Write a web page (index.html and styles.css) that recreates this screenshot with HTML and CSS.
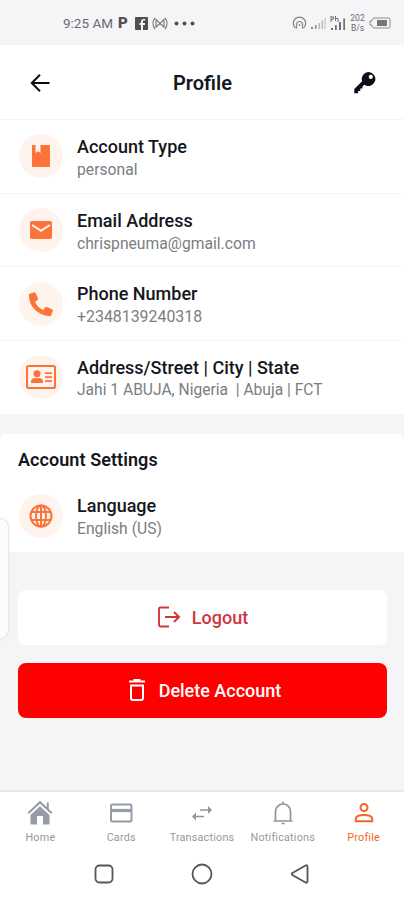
FILE: index.html
```html
<!DOCTYPE html>
<html lang="en">
<head>
    <meta charset="UTF-8">
    <meta name="viewport" content="width=device-width, initial-scale=1.0">
    <title>Profile</title>
    <link rel="stylesheet" href="styles.css">
</head>
<body>
    <div class="status-bar">
        <div class="status-left">
            <span class="time">9:25 AM</span>
            <span class="p-icon">P</span>
            <svg class="fb" width="13" height="13" viewBox="0 0 13 13"><rect width="13" height="13" rx="1" fill="#505053"/><path d="M8 13V8h2V6H8V4.600c0-.7.3-1 1-1h1.200V2H8.500C6.700 2 6 3 6 4.400V6H4.500v2H6v5z" fill="#f5f5f7"/></svg>
            <svg width="16" height="13" viewBox="0 0 16 13" fill="none" stroke="#77777a" stroke-width="1.100"><path d="M3 1C.3 3.500.3 9.500 3 12M13 1c2.700 2.500 2.700 8.500 0 11M4 11V2.500l4 4 4-4V11M4 10l4-3.500 4 3.500"/></svg>
            <svg class="dots" width="21" height="5" viewBox="0 0 21 5" fill="#505053"><circle cx="2.500" cy="2.500" r="2"/><circle cx="10.500" cy="2.500" r="2"/><circle cx="18.500" cy="2.500" r="2"/></svg>
        </div>
        <div class="status-right">
            <svg width="15" height="14" viewBox="0 0 15 14" fill="none" stroke="#858588" stroke-width="1.200"><path d="M3.500 12a6.200 6.200 0 1 1 8 0M4.500 12.500V8.500a3 3 0 0 1 6 0v4M7.500 8v2"/></svg>
            <svg width="15" height="12" viewBox="0 0 15 12" fill="#8b8b8e"><path d="M0 10h2v2H0zM4 8h1.500v4H4z"/><path d="M7.500 6H9v6H7.500zM10.500 3.500H12V12h-1.500zM13.500 1h1v11h-1z" opacity=".55"/></svg>
            <svg width="16" height="14" viewBox="0 0 16 14" fill="#707073"><path d="M1 12h2v2H1zM5 9h1.700v5H5zM9 6h2v8H9zM13.300 2.500h1.700V14h-1.700z"/><path d="M1 0v6M1 1h2.500v2L1 4M5.500 0v5M5.500 2.500H8V6" fill="none" stroke="#707073"/></svg>
            <div class="speed"><span>202</span><span>B/s</span></div>
            <svg width="22" height="12" viewBox="0 0 22 12"><path d="M3 2.500 5 1h14.500Q21 1 21 2.500v7Q21 11 19.500 11H5L3 9.500V8H1V4h2z" fill="none" stroke="#8b8b8e"/><path d="M8 3h10v6H8z" fill="#77777a"/></svg>
        </div>
    </div>

    <header class="header">
        <svg width="24" height="24" viewBox="0 0 24 24" fill="none" stroke="#0b0d12" stroke-width="2"><path d="M21.500 12H4M12 3.700 3.800 12l8.200 8.300"/></svg>
        <h1>Profile</h1>
        <svg width="24" height="24" viewBox="0 0 24 24"><path fill="#0b0f1c" fill-rule="evenodd" d="M15.800 1a7 7 0 0 0-6.700 9.200L1.300 18v4.300h3.800v-2.400h2.200v-2.300h2.200v-2.200l1.800-1.700A7 7 0 1 0 15.800 1zm2 2.800a2 2 0 1 1 0 4.200 2 2 0 0 1 0-4.200z"/></svg>
    </header>

    <section class="list">
        <div class="row">
            <div class="icon"><svg width="18" height="22" viewBox="0 0 18 22"><path fill="#fb7338" d="M1 0h2.500v8L6 6.200 8.500 8V0H17a1 1 0 0 1 1 1v20a1 1 0 0 1-1 1H1a1 1 0 0 1-1-1V1a1 1 0 0 1 1-1z"/></svg></div>
            <div class="text"><h2>Account Type</h2><p>personal</p></div>
        </div>
        <div class="row">
            <div class="icon"><svg width="22" height="18" viewBox="0 0 22 18"><rect width="22" height="18" rx="2" fill="#fb7338"/><path d="m2 4 9 5.700L20 4" fill="none" stroke="#fff3ee" stroke-width="2"/></svg></div>
            <div class="text"><h2>Email Address</h2><p>chrispneuma@gmail.com</p></div>
        </div>
        <div class="row">
            <div class="icon"><svg width="24" height="24" viewBox="0 0 24 24"><path fill="#fb7338" d="M.6 1.800 5 .4c.8-.2 1.400.1 1.700.8l2.200 5c.3.700.1 1.300-.4 1.700L6 10c1.700 3.500 4.400 6.200 8 8l2.200-2.600c.4-.5 1-.7 1.700-.4l5 2.200c.7.3 1 .9.800 1.700l-1.400 4.400c-.2.600-.7.900-1.300.9C9 23.500-.5 14 0 3c0-.6.1-1 .6-1.200z"/></svg></div>
            <div class="text"><h2>Phone Number</h2><p class="number">+2348139240318</p></div>
        </div>
        <div class="row">
            <div class="icon"><svg width="30" height="24" viewBox="0 0 30 24" fill="#fb7338"><rect x="1" y="1" width="28" height="22" rx="1.800" fill="none" stroke="#fb7338" stroke-width="2"/><circle cx="11" cy="8.700" r="3.500"/><path d="M5 18v-1.600c0-2.400 2-3.500 4-3.500.8.500 3.200.5 4 0 2 0 4 1.100 4 3.500V18zM19 7.200h7v1.700h-7zM19 11.200h7v1.700h-7zM19 15.200h7v1.700h-7z"/></svg></div>
            <div class="text"><h2>Address/Street | City | State</h2><p class="address">Jahi 1 ABUJA, Nigeria&nbsp; | Abuja | FCT</p></div>
        </div>
    </section>

    <section class="settings">
        <h3>Account Settings</h3>
        <div class="row">
            <div class="icon"><svg width="24" height="24" viewBox="0 0 24 24" fill="none" stroke="#fb7338" stroke-width="2"><circle cx="12" cy="12" r="10.500"/><ellipse cx="12" cy="12" rx="5" ry="10.500"/><path d="M12 1.500v21M2.500 8h19M2.500 16h19"/></svg></div>
            <div class="text"><h2>Language</h2><p>English (US)</p></div>
        </div>
    </section>
    <div class="edge-panel"></div>

    <div class="actions">
        <button class="btn logout">
            <svg width="24" height="22" viewBox="0 0 24 22" fill="none" stroke="#d0353d" stroke-width="1.900"><path d="M12 1.500H3.500Q2 1.500 2 3v16q0 1.500 1.500 1.500H12M8 11h14M17 6l5 5-5 5"/></svg>
            Logout
        </button>
        <button class="btn delete">
            <svg width="18" height="22" viewBox="0 0 18 22" fill="none" stroke="#fff" stroke-width="2"><path d="M1 2.500h16M5.500 1h7M3 6.500h12V19q0 2-2 2H5q-2 0-2-2z"/></svg>
            Delete Account
        </button>
    </div>

    <nav class="tabs">
        <a class="tab">
            <svg width="26" height="26" viewBox="0 0 26 26"><path fill="#969ba8" d="M13 6.200 22.500 15v8.500q0 1-1 1H16V16h-6v8.500H4.500q-1 0-1-1V15z"/><path d="m1.200 13.200 11.800-11 11.800 11M20.800 9V2.500" fill="none" stroke="#969ba8" stroke-width="2"/></svg>
            Home
        </a>
        <a class="tab">
            <svg width="26" height="26" viewBox="0 0 26 26" fill="none" stroke="#969ba8" stroke-width="2"><rect x="3" y="4.500" width="20.500" height="17" rx="1.500"/><path d="M3 10.500h20.500" stroke-width="3.200"/></svg>
            Cards
        </a>
        <a class="tab">
            <svg width="26" height="26" viewBox="0 0 26 26" fill="#929499"><path d="M11 9.200h8V6l4 4-4 4v-3.200h-8zM15 15.700H7v-3.200l-4 4 4 4v-3.200h8z"/></svg>
            Transactions
        </a>
        <a class="tab">
            <svg width="26" height="26" viewBox="0 0 26 26" fill="none" stroke="#929499" stroke-width="1.700"><path d="M3.500 21h19M5.500 21v-9.500a7.500 7.500 0 0 1 15 0V21M13 4V1.500M11.500 23.500h3"/></svg>
            Notifications
        </a>
        <a class="tab active">
            <svg width="26" height="26" viewBox="0 0 26 26" fill="none" stroke="#f4652a" stroke-width="2"><circle cx="13" cy="7.500" r="3.500"/><path d="M4.800 21.200v-2.500c0-5 16.400-5 16.400 0v2.500z"/></svg>
            Profile
        </a>
    </nav>

    <div class="system-nav">
        <svg width="20" height="20" viewBox="0 0 20 20"><rect x="1.500" y="1.500" width="17" height="17" rx="4"/></svg>
        <svg width="22" height="22" viewBox="0 0 22 22"><circle cx="11" cy="11" r="9.500"/></svg>
        <svg width="20" height="20" viewBox="0 0 20 20"><path d="M2.400 9 15.500 1.500q2-.8 2 1.200v14.600q0 2-2 1.200L2.400 11q-1.400-1 0-2z"/></svg>
    </div>
</body>
</html>
```
FILE: styles.css
```css
* { box-sizing: border-box; }
body {
    margin: 0;
    width: 404px;
    height: 900px;
    overflow: hidden;
    display: flex;
    flex-direction: column;
    position: relative;
    background-color: #f5f5f8;
    color: #14171c;
    font-family: Roboto, sans-serif;
}
h1, h2, h3, p { margin: 0; }
svg { display: block; flex-shrink: 0; }
.status-bar {
    height: 45px;
    flex-shrink: 0;
    display: flex;
    justify-content: space-between;
    align-items: center;
    padding: 1px 13px 0 63px;
    color: #6a6a6d;
}
.status-left, .status-right {
    display: flex;
    align-items: center;
}
.status-left { gap: 4px; }
.status-right { gap: 4px; }
.time { font-size: 13.5px; width: 51px; white-space: nowrap; }
.p-icon { font-size: 15px; font-weight: 900; color: #505053; width: 10px; }
.fb { margin-left: 3px; }
.dots { margin-left: 2px; }
.speed {
    display: flex;
    flex-direction: column;
    gap: 1px;
    width: 15px;
    font-size: 8.5px;
    line-height: 9px;
    text-align: center;
}
.header {
    height: 74px;
    flex-shrink: 0;
    display: flex;
    align-items: center;
    justify-content: space-between;
    padding: 2px 27px 0 28px;
    background-color: white;
}
.header h1 { font-size: 20px; font-weight: 600; line-height: 24px; }
.list { flex-shrink: 0; background-color: white; }
.row {
    display: flex;
    align-items: center;
    height: 73.7px;
    padding: 0 18px 0 19px;
    gap: 14px;
}
.list .row { border-top: 1px solid #f5f5f7; }
.icon {
    width: 44px;
    height: 44px;
    border-radius: 50%;
    background-color: #fff3ee;
    display: flex;
    align-items: center;
    justify-content: center;
    flex-shrink: 0;
}
.text { padding-top: 4px; white-space: nowrap; }
h2 { font-size: 18px; font-weight: 500; line-height: 22px; }
.text p { font-size: 15.7px; line-height: 23px; color: #7b7d81; }
.text .number { font-size: 15.9px; }
.text .address { font-size: 15.6px; }
.settings {
    flex-shrink: 0;
    height: 118.2px;
    margin-top: 20px;
    padding-top: 14px;
    background-color: white;
    border-radius: 6px 6px 0 0;
}
h3 { font-size: 18px; font-weight: 600; line-height: 24px; padding-left: 18px; letter-spacing: 0.07px; }
.settings .row { height: 72px; margin-top: 8px; }
/* drawer handle that sits on top of the page */
.edge-panel {
    position: absolute;
    left: -10px;
    top: 518px;
    width: 19px;
    height: 121px;
    background-color: #fcfcfd;
    border: 1px solid #e9e9ec;
    border-radius: 10px;
    box-shadow: 0 0 2px #e1e1e5;
}
.actions {
    flex: 1;
    display: flex;
    flex-direction: column;
    gap: 18px;
    padding: 38px 17px 0 18px;
}
.btn {
    height: 55px;
    border: 0;
    border-radius: 8px;
    display: flex;
    align-items: center;
    justify-content: center;
    font-family: inherit;
    font-size: 18px;
    font-weight: 500;
}
.logout { background-color: white; color: #d0353d; gap: 11px; padding-left: 6px; }
.delete { background-color: #ff0000; color: white; gap: 13px; padding-left: 10px; }
.tabs {
    height: 57px;
    flex-shrink: 0;
    display: grid;
    grid-template-columns: repeat(5, 1fr);
    background-color: white;
    border-top: 2px solid #e8e8eb;
    padding-top: 8px;
}
.tab {
    display: flex;
    flex-direction: column;
    align-items: center;
    gap: 5px;
    font-size: 10.8px;
    line-height: 14px;
    letter-spacing: 0.2px;
    color: #96989e;
}
.tab.active { color: #f4652a; }
.system-nav {
    height: 53px;
    flex-shrink: 0;
    display: flex;
    justify-content: center;
    align-items: center;
    gap: 77px;
    background-color: white;
}
.system-nav svg { fill: none; stroke: #55565a; stroke-width: 1.8; }
```
